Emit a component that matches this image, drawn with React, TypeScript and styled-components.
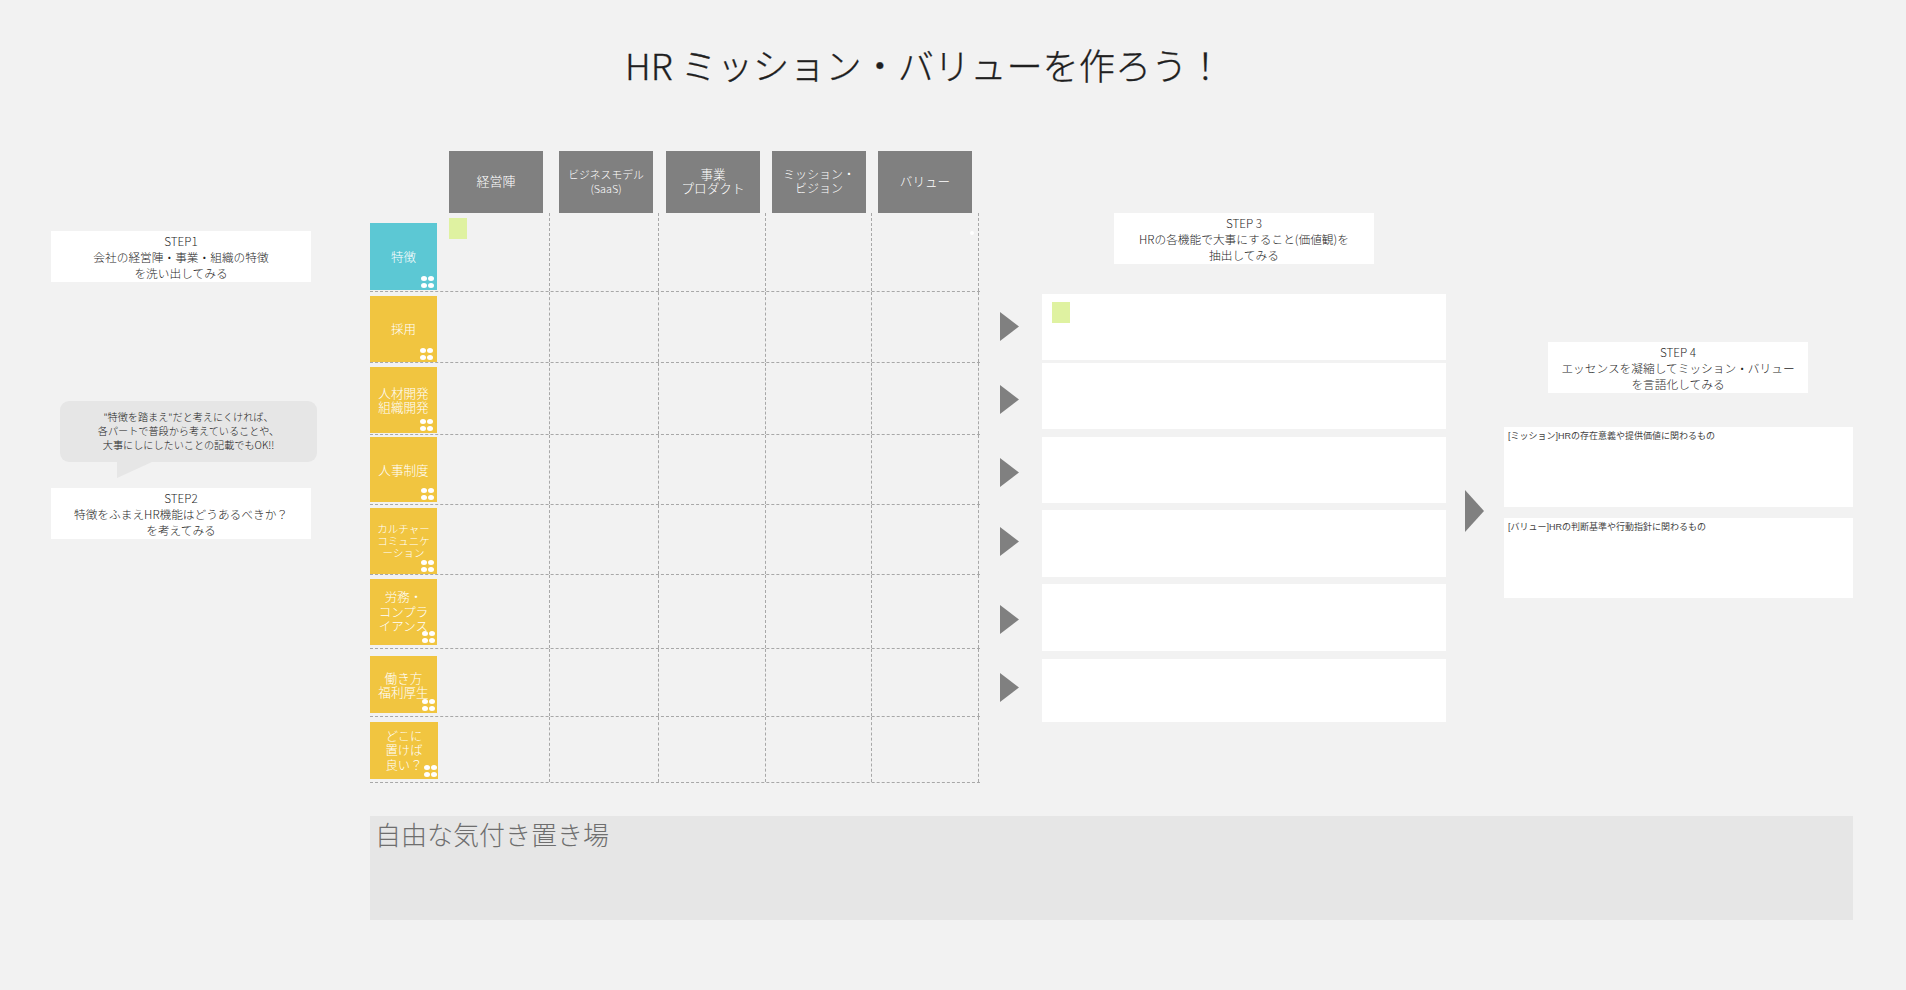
import React from "react";
import styled, { createGlobalStyle } from "styled-components";

const Global = createGlobalStyle`
  html, body { margin: 0; padding: 0; background: #f2f2f2; }
  body { font-family: "Noto Sans CJK JP", "Noto Sans", sans-serif; color: #333; overflow: hidden; }
`;

const Page = styled.div`
  width: 1906px;
  height: 990px;
  background: #f2f2f2;
  overflow: hidden;
`;

const Title = styled.h1`
  margin: 0;
  height: 151px;
  padding: 38px 0 0 625px;
  box-sizing: border-box;
  font-size: 36.2px;
  line-height: 52px;
  font-weight: 300;
  color: #1f1f1f;
  -webkit-text-stroke: 0.3px #1f1f1f;
  white-space: pre;
`;

const Board = styled.div`
  display: flex;
  align-items: flex-start;
  height: 665px;
  padding-left: 51px;
`;

const NotesColumn = styled.div`
  width: 266px;
  padding-top: 80px;
  display: flex;
  flex-direction: column;
  align-items: flex-start;
`;

const StepBox = styled.div<{ $left?: number; $top?: number }>`
  width: 260px;
  height: 51px;
  padding-top: 2px;
  box-sizing: border-box;
  margin-left: ${(p) => p.$left ?? 0}px;
  margin-top: ${(p) => p.$top ?? 0}px;
  background: #fff;
  font-size: 11.7px;
  line-height: 16px;
  font-weight: 300;
  color: #1f1f1f;
  text-align: center;
  white-space: pre-line;
  flex: none;
`;

const Bubble = styled.div`
  position: relative;
  width: 257px;
  height: 61px;
  margin: 119px 0 0 9px;
  padding-top: 9px;
  box-sizing: border-box;
  background: #e6e6e6;
  border-radius: 9px;
  font-size: 10.15px;
  line-height: 14px;
  font-weight: 300;
  color: #222;
  text-align: center;
  white-space: pre-line;
  &::after {
    content: "";
    position: absolute;
    left: 57px;
    top: 61px;
    width: 35px;
    height: 16px;
    background: #e6e6e6;
    clip-path: polygon(0 0, 100% 0, 0 100%);
  }
`;

const Matrix = styled.div`
  width: 610px;
  margin-left: 53px;
`;

const HeaderRow = styled.div`
  display: grid;
  grid-template-columns: 110px 107px 106px 106px 93px;
  height: 62px;
  padding-left: 79px;
`;

const HeaderCell = styled.div<{ $size: number }>`
  width: 94px;
  height: 62px;
  padding-bottom: 2px;
  box-sizing: border-box;
  background: #808080;
  color: #fff;
  font-size: ${(p) => p.$size}px;
  line-height: 14px;
  font-weight: 300;
  display: flex;
  align-items: center;
  justify-content: center;
  text-align: center;
  white-space: pre-line;
`;

const GridRow = styled.div<{ $height: number }>`
  display: grid;
  grid-template-columns: 180px 109px 107px 106px 107px;
  height: ${(p) => p.$height}px;
  box-sizing: border-box;
  border-bottom: 1px dashed #a8a8a8;
`;

const Cell = styled.div`
  display: flex;
  align-items: flex-start;
  justify-content: space-between;
  border-right: 1px dashed #a8a8a8;
`;

const FirstCell = styled(Cell)`
  justify-content: flex-start;
`;

const RowLabel = styled.div<{
  $top: number;
  $height: number;
  $width: number;
  $color: string;
  $size: number;
  $line: number;
}>`
  position: relative;
  flex: none;
  width: ${(p) => p.$width}px;
  height: ${(p) => p.$height}px;
  margin-top: ${(p) => p.$top}px;
  background: ${(p) => p.$color};
  color: #fff;
  font-size: ${(p) => p.$size}px;
  line-height: ${(p) => p.$line}px;
  font-weight: 300;
  display: flex;
  align-items: center;
  justify-content: center;
  text-align: center;
  white-space: pre-line;
`;

const Dots = styled.div<{ $right: number }>`
  position: absolute;
  right: ${(p) => p.$right}px;
  bottom: 2px;
  display: grid;
  grid-template-columns: 6px 6px;
  grid-auto-rows: 5px;
  gap: 2px 1px;
  & > i {
    display: block;
    background: #fff;
    border-radius: 50%;
  }
`;

const Sticky = styled.div<{ $left: number; $top: number }>`
  flex: none;
  width: 18px;
  height: 21px;
  margin-left: ${(p) => p.$left}px;
  margin-top: ${(p) => p.$top}px;
  background: #dff2a1;
`;

const Speck = styled.div`
  width: 4px;
  height: 4px;
  margin: 18px 4px 0 auto;
  border-radius: 50%;
  background: #fff;
`;

const ArrowColumn = styled.div<{ $left: number }>`
  width: 19px;
  margin-left: ${(p) => p.$left}px;
  flex: none;
`;

const Arrow = styled.svg<{ $top: number }>`
  display: block;
  margin-top: ${(p) => p.$top}px;
  fill: #808080;
`;

const WorkColumn = styled.div<{ $left: number; $width: number; $pad: number }>`
  flex: none;
  width: ${(p) => p.$width}px;
  margin-left: ${(p) => p.$left}px;
  padding-top: ${(p) => p.$pad}px;
  display: flex;
  flex-direction: column;
  align-items: flex-start;
`;

const WhiteBox = styled.div<{ $top: number; $height: number }>`
  width: 100%;
  height: ${(p) => p.$height}px;
  margin-top: ${(p) => p.$top}px;
  display: flow-root;
  background: #fff;
  flex: none;
`;

const BoxNote = styled.div`
  margin: 3px 0 0 4px;
  font-family: "Liberation Sans", "Noto Sans CJK JP", sans-serif;
  font-size: 9px;
  line-height: 12px;
  font-weight: 400;
  color: #444;
`;

const FreeArea = styled.div`
  width: 1483px;
  height: 104px;
  margin-left: 370px;
  padding: 1px 0 0 5px;
  box-sizing: border-box;
  background: #e6e6e6;
  font-size: 26px;
  line-height: 34px;
  font-weight: 300;
  color: #6e6e6e;
`;

const headers = [
  { text: "経営陣", size: 13 },
  { text: "ビジネスモデル\n(SaaS)", size: 10.8 },
  { text: "事業\nプロダクト", size: 12.6 },
  { text: "ミッション・\nビジョン", size: 12 },
  { text: "バリュー", size: 12.6 },
];

const TEAL = "#5cc8d4";
const YELLOW = "#f1c540";

const rows = [
  { h: 79, top: 10, lh: 67, w: 67, color: TEAL, text: "特徴", size: 12.5, line: 14, dot: 3 },
  { h: 71, top: 4, lh: 66, w: 67, color: YELLOW, text: "採用", size: 12.5, line: 14, dot: 4 },
  { h: 72, top: 4, lh: 66, w: 67, color: YELLOW, text: "人材開発\n組織開発", size: 12.6, line: 14, dot: 4 },
  { h: 70, top: 2, lh: 65, w: 67, color: YELLOW, text: "人事制度", size: 12.6, line: 14, dot: 3 },
  { h: 70, top: 3, lh: 66, w: 67, color: YELLOW, text: "カルチャー\nコミュニケ\nーション", size: 10.5, line: 12, dot: 3 },
  { h: 74, top: 4, lh: 66, w: 67, color: YELLOW, text: "労務・\nコンプラ\nイアンス", size: 12.5, line: 14.5, dot: 2 },
  { h: 68, top: 7, lh: 57, w: 67, color: YELLOW, text: "働き方\n福利厚生", size: 12.6, line: 14, dot: 2 },
  { h: 66, top: 5, lh: 57, w: 68, color: YELLOW, text: "どこに\n置けば\n良い？", size: 12.3, line: 14.5, dot: 1 },
];

const smallArrows = [161, 44, 44, 40, 49, 39];

const workBoxes = [
  { top: 30, h: 66 },
  { top: 3, h: 66 },
  { top: 8, h: 66 },
  { top: 7, h: 67 },
  { top: 7, h: 67 },
  { top: 8, h: 63 },
];

export default function App() {
  return (
    <Page>
      <Global />
      <Title>HR ミッション・バリューを作ろう！</Title>
      <Board>
        <NotesColumn>
          <StepBox>{"STEP1\n会社の経営陣・事業・組織の特徴\nを洗い出してみる"}</StepBox>
          <Bubble>{"\"特徴を踏まえ\"だと考えにくければ、\n各パートで普段から考えていることや、\n大事にしにしたいことの記載でもOK!!"}</Bubble>
          <StepBox $top={26}>{"STEP2\n特徴をふまえHR機能はどうあるべきか？\nを考えてみる"}</StepBox>
        </NotesColumn>

        <Matrix>
          <HeaderRow>
            {headers.map((h) => (
              <HeaderCell key={h.text} $size={h.size}>
                {h.text}
              </HeaderCell>
            ))}
          </HeaderRow>
          {rows.map((r, i) => (
            <GridRow key={r.text} $height={r.h}>
              <FirstCell>
                <RowLabel $top={r.top} $height={r.lh} $width={r.w} $color={r.color} $size={r.size} $line={r.line}>
                  {r.text}
                  <Dots $right={r.dot}>
                    <i />
                    <i />
                    <i />
                    <i />
                  </Dots>
                </RowLabel>
                {i === 0 && <Sticky $left={12} $top={5} />}
              </FirstCell>
              <Cell />
              <Cell />
              <Cell />
              <Cell>{i === 0 && <Speck />}</Cell>
            </GridRow>
          ))}
        </Matrix>

        <ArrowColumn $left={20}>
          {smallArrows.map((top, i) => (
            <Arrow key={i} $top={top} width="19" height="29" viewBox="0 0 19 29">
              <polygon points="0,0 19,14.5 0,29" />
            </Arrow>
          ))}
        </ArrowColumn>

        <WorkColumn $left={23} $width={404} $pad={62}>
          <StepBox $left={72}>
            {"STEP 3\nHRの各機能で大事にすること(価値観)を\n抽出してみる"}
          </StepBox>
          {workBoxes.map((b, i) => (
            <WhiteBox key={i} $top={b.top} $height={b.h}>
              {i === 0 && <Sticky $left={10} $top={8} />}
            </WhiteBox>
          ))}
        </WorkColumn>

        <ArrowColumn $left={19}>
          <Arrow $top={339} width="19" height="42" viewBox="0 0 19 42">
            <polygon points="0,0 19,21 0,42" />
          </Arrow>
        </ArrowColumn>

        <WorkColumn $left={20} $width={349} $pad={191}>
          <StepBox $left={44}>{"STEP 4\nエッセンスを凝縮してミッション・バリュー\nを言語化してみる"}</StepBox>
          <WhiteBox $top={34} $height={80}>
            <BoxNote>[ミッション]HRの存在意義や提供価値に関わるもの</BoxNote>
          </WhiteBox>
          <WhiteBox $top={11} $height={80}>
            <BoxNote>[バリュー]HRの判断基準や行動指針に関わるもの</BoxNote>
          </WhiteBox>
        </WorkColumn>
      </Board>
      <FreeArea>自由な気付き置き場</FreeArea>
    </Page>
  );
}
